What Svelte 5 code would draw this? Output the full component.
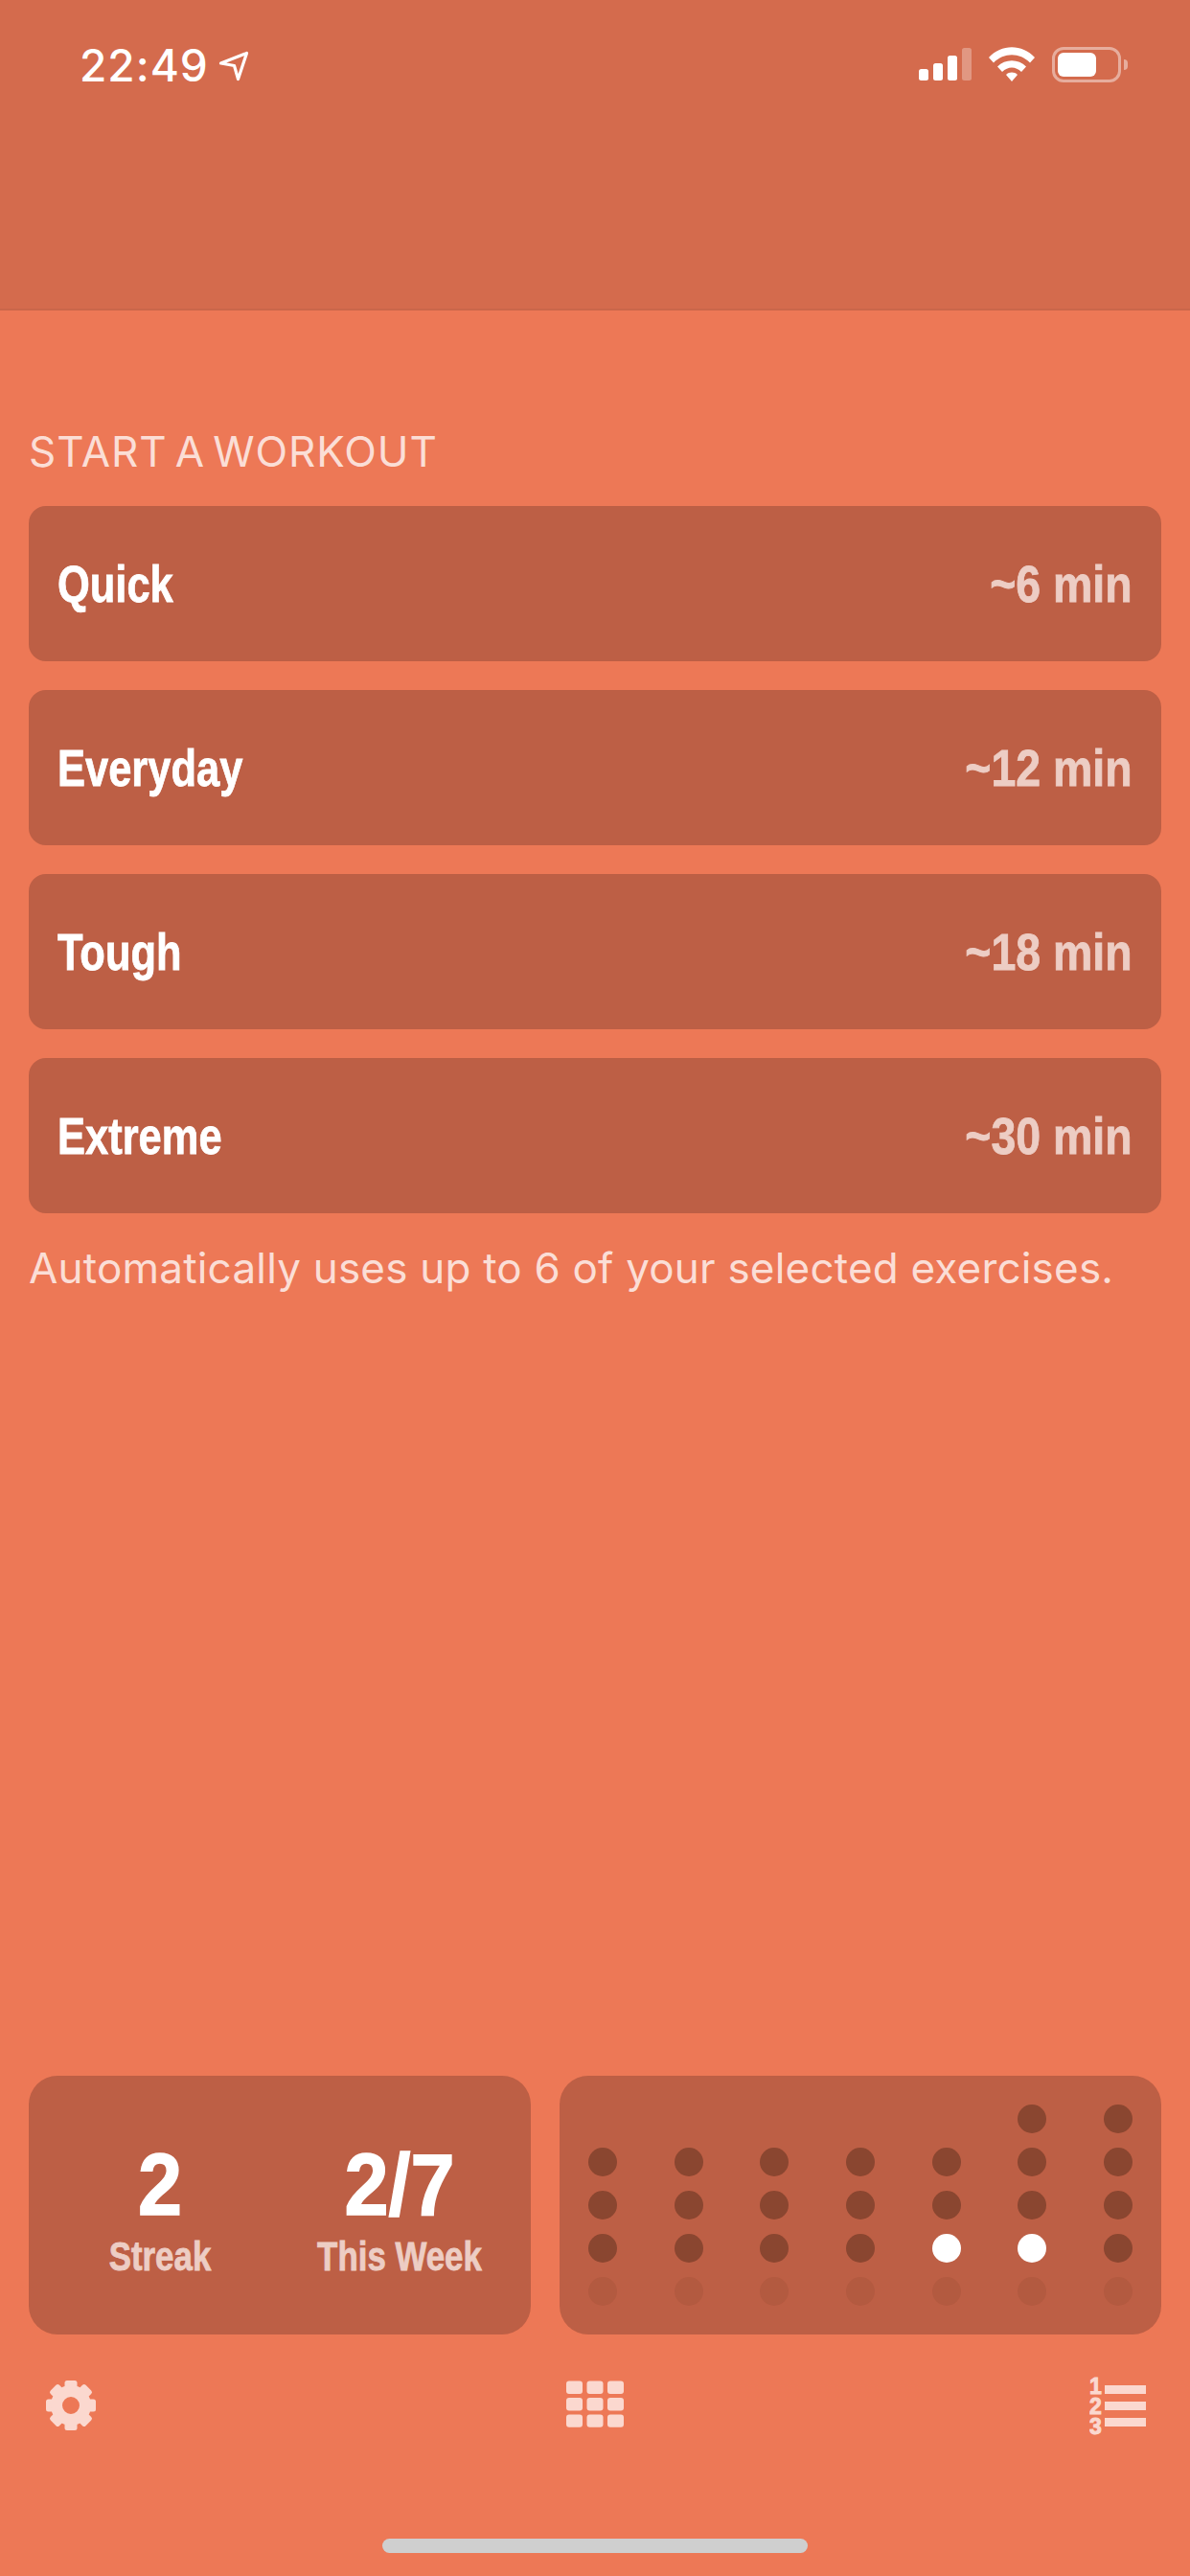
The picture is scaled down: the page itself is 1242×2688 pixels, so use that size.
<script lang="ts">
    const workouts = [
        { name: 'Quick', time: '~6 min' },
        { name: 'Everyday', time: '~12 min' },
        { name: 'Tough', time: '~18 min' },
        { name: 'Extreme', time: '~30 min' }
    ];

    const stats = [
        { value: '2', label: 'Streak' },
        { value: '2/7', label: 'This Week' }
    ];

    // each column is a week day, dots listed top to bottom
    const days = [
        ['off', 'off', 'off', 'faint'],
        ['off', 'off', 'off', 'faint'],
        ['off', 'off', 'off', 'faint'],
        ['off', 'off', 'off', 'faint'],
        ['off', 'off', 'on', 'faint'],
        ['off', 'off', 'off', 'on', 'faint'],
        ['off', 'off', 'off', 'off', 'faint']
    ];

    const teeth = [0, 45, 90, 135, 180, 225, 270, 315];
    const cells = [0, 1, 2, 3, 4, 5, 6, 7, 8];
    const bars = [
        { x: 0, y: 22, h: 12, o: 1 },
        { x: 15, y: 16, h: 18, o: 1 },
        { x: 30, y: 8, h: 26, o: 1 },
        { x: 45, y: 0, h: 34, o: 0.3 }
    ];
</script>

<div class="screen">
    <header class="header">
        <div class="status">
            <div class="clock">
                <span class="time">22:49</span>
                <svg class="arrow" width="32" height="32" viewBox="0 0 32 32">
                    <path d="M2.500 13 L29.500 2.500 L20.500 29.500 L16.500 15.500 Z" fill="none" stroke="#fff" stroke-width="3.200" stroke-linejoin="round" />
                </svg>
            </div>
            <div class="indicators">
                <svg width="55" height="34" viewBox="0 0 55 34">
                    {#each bars as bar}
                        <rect x={bar.x} y={bar.y} width="10" height={bar.h} rx="2.500" fill="#fff" opacity={bar.o} />
                    {/each}
                </svg>
                <svg width="48" height="36" viewBox="0 0 48 36">
                    <path d="M0 11 C13 -3.500 35 -3.500 48 11 L43 16.500 C32.500 5.500 15.500 5.500 5 16.500 Z" fill="#fff" />
                    <path d="M9 20.500 C17 12 31 12 39 20.500 L34 26 C28 20 20 20 14 26 Z" fill="#fff" />
                    <path d="M18 29 C21.500 25.800 26.500 25.800 30 29 L24 36 Z" fill="#fff" />
                </svg>
                <div class="battery">
                    <div class="battery-fill"></div>
                </div>
                <div class="battery-nub"></div>
            </div>
        </div>
    </header>

    <main class="content">
        <h2 class="section-title">START A WORKOUT</h2>
        <div class="workouts">
            {#each workouts as workout}
                <button class="workout">
                    <span class="workout-name">{workout.name}</span>
                    <span class="workout-time">{workout.time}</span>
                </button>
            {/each}
        </div>
        <p class="note">Automatically uses up to 6 of your selected exercises.</p>

        <div class="summary">
            <div class="panel stats">
                {#each stats as stat}
                    <div class="stat">
                        <div class="stat-value">{stat.value}</div>
                        <div class="stat-label">{stat.label}</div>
                    </div>
                {/each}
            </div>
            <div class="panel history">
                {#each days as day}
                    <div class="day">
                        {#each day as dot}
                            <span class="dot {dot}"></span>
                        {/each}
                    </div>
                {/each}
            </div>
        </div>
    </main>

    <nav class="toolbar">
        <svg class="tool-left" width="60" height="60" viewBox="0 0 60 60" aria-label="Settings">
            {#each teeth as angle}
                <rect x="23.500" y="3" width="13" height="14" rx="2.500" fill="#fbd8cf" transform="rotate({angle} 30 29)" />
            {/each}
            <circle cx="30" cy="29" r="15" fill="none" stroke="#fbd8cf" stroke-width="12" />
        </svg>
        <svg width="60" height="60" viewBox="0 0 60 60" aria-label="Exercises">
            {#each cells as cell}
                <rect x={(cell % 3) * 21.500} y={3.600 + Math.floor(cell / 3) * 17.400} width="17" height="13.400" rx="3" fill="#fbd8cf" />
            {/each}
        </svg>
        <svg class="tool-right" width="60" height="72" viewBox="0 -6 60 72" aria-label="History">
            <g fill="#fbd8cf" stroke="#fbd8cf" stroke-width="1" font-family="'Liberation Sans', sans-serif" font-weight="700" font-size="23">
                <text x="0" y="17">1</text>
                <text x="0" y="38">2</text>
                <text x="0" y="59">3</text>
            </g>
            <rect x="16" y="8" width="43" height="9" fill="#fbd8cf" />
            <rect x="16" y="25" width="43" height="9" fill="#fbd8cf" />
            <rect x="16" y="42" width="43" height="9" fill="#fbd8cf" />
        </svg>
    </nav>
    <div class="home-bar"></div>
</div>

<style>
    :global(body) {
        margin: 0;
        background: #ed7856;
    }

    .screen {
        width: 1242px;
        height: 2688px;
        display: flex;
        flex-direction: column;
        background: #ed7856;
        font-family: Inter, 'Liberation Sans', sans-serif;
        color: #fff;
    }

    .header {
        height: 324px;
        box-sizing: border-box;
        background: #d46b4d;
        border-bottom: 2px solid #ca664a;
        padding: 49px 65px 0 83px;
    }

    .status {
        display: flex;
        justify-content: space-between;
        align-items: flex-start;
    }

    .clock {
        display: flex;
        align-items: center;
        gap: 10px;
    }

    .time {
        font-size: 46px;
        line-height: 38px;
        font-weight: 500;
        letter-spacing: 1px;
    }

    .arrow {
        margin-top: 2px;
    }

    .indicators {
        display: flex;
        align-items: flex-start;
    }

    .indicators svg:first-child {
        margin: 1px 18px 0 1px;
    }

    .indicators svg:nth-child(2) {
        margin-right: 18px;
    }

    .battery {
        width: 72px;
        height: 37px;
        box-sizing: border-box;
        border: 3px solid rgba(255, 255, 255, 0.45);
        border-radius: 12px;
        padding: 3px;
    }

    .battery-fill {
        width: 40px;
        height: 25px;
        background: #fff;
        border-radius: 6px;
    }

    .battery-nub {
        width: 4px;
        height: 11px;
        margin: 13px 0 0 3px;
        background: rgba(255, 255, 255, 0.45);
        border-radius: 0 4px 4px 0;
    }

    .content {
        flex: 1;
        display: flex;
        flex-direction: column;
        padding: 121px 30px 0;
    }

    .section-title {
        margin: 0 0 31px;
        font-size: 44px;
        line-height: 52px;
        font-weight: 400;
        letter-spacing: 0.900px;
        word-spacing: -5px;
        color: #fbded6;
    }

    .workouts {
        display: flex;
        flex-direction: column;
        gap: 30px;
    }

    .workout {
        height: 162px;
        padding: 0 30px 0 30px;
        display: flex;
        justify-content: space-between;
        align-items: center;
        border: none;
        border-radius: 18px;
        background: #bd5f45;
        font-family: 'Liberation Sans', sans-serif;
        font-size: 54px;
        font-weight: 700;
        -webkit-text-stroke: 0.800px currentColor;
    }

    /* no condensed face is installed, so the bold is squeezed instead */
    .workout-name {
        color: #fff;
        transform: scaleX(0.805);
        transform-origin: left center;
    }

    .workout-time {
        color: #edcdc4;
        transform: scaleX(0.86);
        transform-origin: right center;
    }

    .note {
        margin: 31px 0 0;
        font-size: 44px;
        line-height: 52px;
        letter-spacing: 0.200px;
        color: #fbded6;
    }

    .summary {
        margin-top: auto;
        display: flex;
        gap: 30px;
    }

    .panel {
        height: 270px;
        box-sizing: border-box;
        border-radius: 30px;
        background: #bd5f45;
    }

    .stats {
        width: 524px;
        padding: 13px 12px 0;
        display: grid;
        grid-template-columns: 1fr 1fr;
        align-items: center;
        font-family: 'Liberation Sans', sans-serif;
        font-weight: 700;
        text-align: center;
    }

    .stat-value {
        font-size: 90px;
        line-height: 90px;
        -webkit-text-stroke: 1.500px currentColor;
        transform: scaleX(0.92);
    }

    .stat-label {
        margin-top: 5px;
        font-size: 42px;
        line-height: 50px;
        color: #edcdc4;
        -webkit-text-stroke: 0.800px currentColor;
        transform: scaleX(0.83);
    }

    .history {
        flex: 1;
        padding: 30px;
        display: flex;
        justify-content: space-between;
    }

    .day {
        display: flex;
        flex-direction: column;
        justify-content: flex-end;
        gap: 15px;
    }

    .dot {
        width: 30px;
        height: 30px;
        border-radius: 50%;
    }

    .dot.off {
        background: #8a4630;
    }

    .dot.on {
        background: #fff;
    }

    .dot.faint {
        background: #b35a40;
    }

    .toolbar {
        display: grid;
        grid-template-columns: 1fr auto 1fr;
        height: 60px;
        padding: 45px 45px 0;
    }

    .tool-left {
        margin-left: -1px;
    }

    .tool-right {
        justify-self: end;
        margin-top: -6px;
    }

    .home-bar {
        width: 444px;
        height: 15px;
        margin: 108px auto 24px;
        border-radius: 8px;
        background: #cfcfcf;
    }
</style>
